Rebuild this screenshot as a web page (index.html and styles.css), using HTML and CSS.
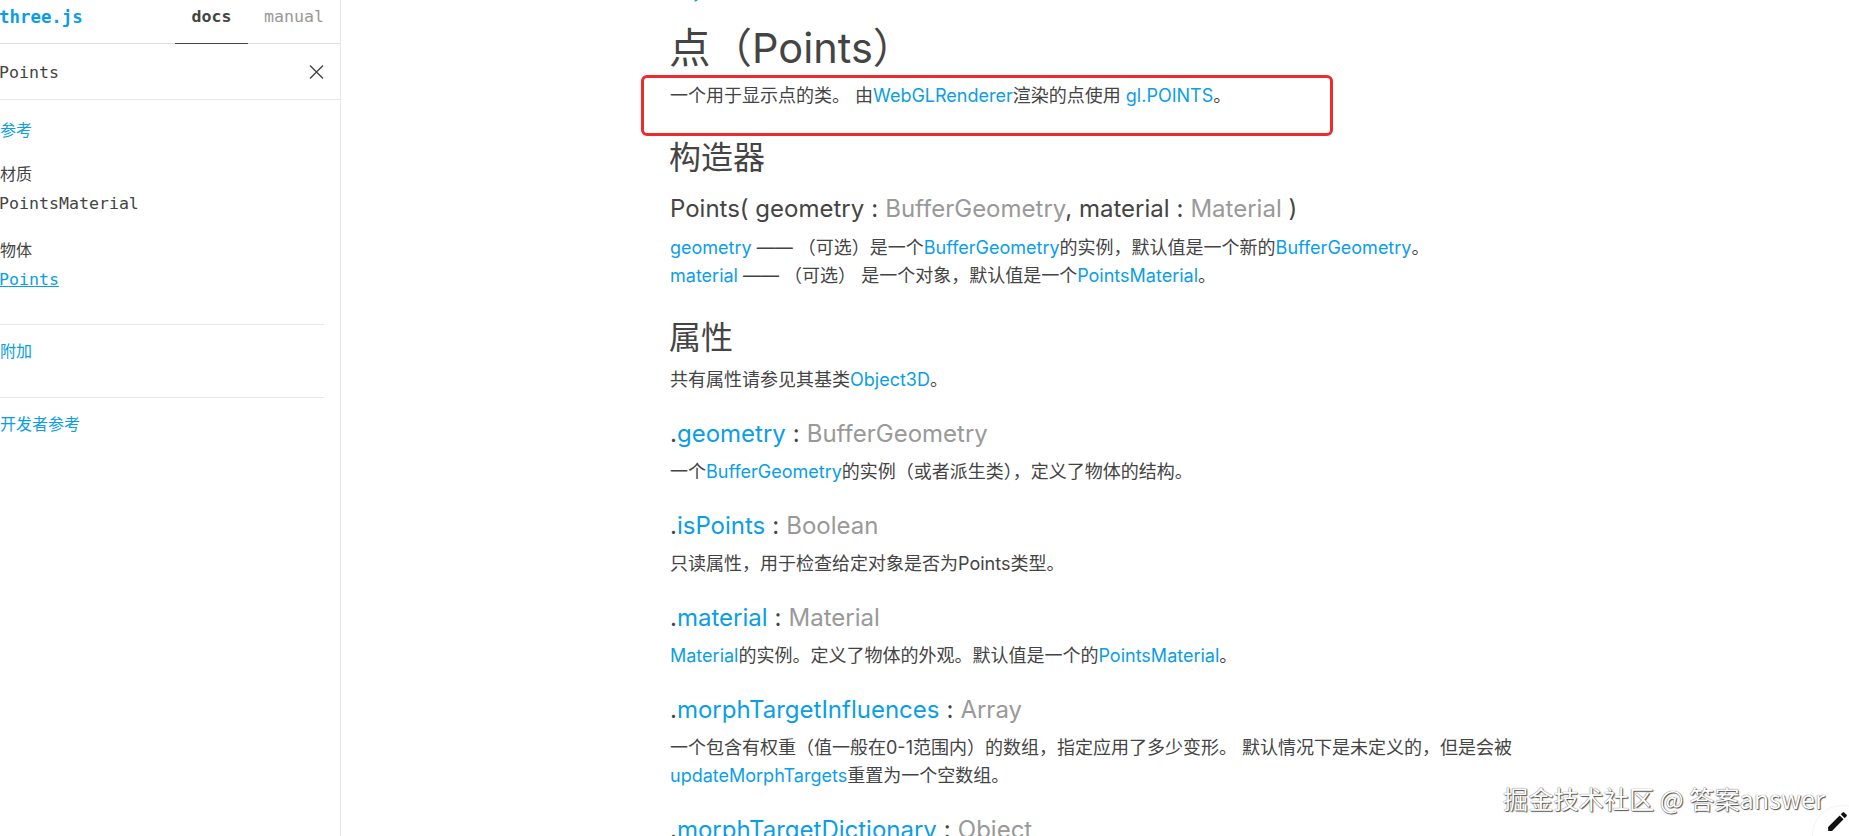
FILE: index.html
```html
<!DOCTYPE html>
<html lang="zh">
<head>
<meta charset="utf-8">
<title>Points</title>
<link rel="stylesheet" href="styles.css">
</head>
<body>
<aside class="side">
  <header class="top">
    <a class="logo">three.js</a>
    <nav class="tabs"><span class="tab on">docs</span><span class="tab">manual</span></nav>
  </header>
  <div class="search">
    <span class="query">Points</span>
    <svg class="close" width="16" height="16" viewBox="0 0 16 16"><path d="M2 1.5 15 14.5M15 1.5 2 14.5" stroke="#444" stroke-width="1.4" fill="none"/></svg>
  </div>
  <div class="nav">
    <h2 class="cat first">参考</h2>
    <h3 class="grp">材质</h3>
    <a class="item">PointsMaterial</a>
    <h3 class="grp">物体</h3>
    <a class="item cur">Points</a>
    <hr class="rule">
    <h2 class="cat">附加</h2>
    <hr class="rule">
    <h2 class="cat">开发者参考</h2>
  </div>
</aside>
<main class="main">
  <p class="crumb"><a>Object3D</a></p>
  <h1 class="title">点（Points）</h1>
  <p class="p intro">一个用于显示点的类。 由<a>WebGLRenderer</a>渲染的点使用 <a>gl.POINTS</a>。</p>
  <h2 class="sec">构造器</h2>
  <h3 class="sig">Points( geometry<i class="c">:</i><span class="t">BufferGeometry</span>, material<i class="c">:</i><span class="t">Material</span> )</h3>
  <p class="p"><a>geometry</a> —— （可选）是一个<a>BufferGeometry</a>的实例，默认值是一个新的<a>BufferGeometry</a>。<br><a>material</a> —— （可选） 是一个对象，默认值是一个<a>PointsMaterial</a>。</p>
  <h2 class="sec">属性</h2>
  <p class="p">共有属性请参见其基类<a>Object3D</a>。</p>
  <h3 class="prop">.<a>geometry</a><i class="c">:</i><span class="t">BufferGeometry</span></h3>
  <p class="p">一个<a>BufferGeometry</a>的实例（或者派生类），定义了物体的结构。</p>
  <h3 class="prop">.<a>isPoints</a><i class="c">:</i><span class="t">Boolean</span></h3>
  <p class="p">只读属性，用于检查给定对象是否为Points类型。</p>
  <h3 class="prop">.<a>material</a><i class="c">:</i><span class="t">Material</span></h3>
  <p class="p"><a>Material</a>的实例。定义了物体的外观。默认值是一个的<a>PointsMaterial</a>。</p>
  <h3 class="prop">.<a>morphTargetInfluences</a><i class="c">:</i><span class="t">Array</span></h3>
  <p class="p">一个包含有权重（值一般在0-1范围内）的数组，指定应用了多少变形。 默认情况下是未定义的，但是会被<br><a>updateMorphTargets</a>重置为一个空数组。</p>
  <h3 class="prop">.<a>morphTargetDictionary</a><i class="c">:</i><span class="t">Object</span></h3>
</main>
<div class="mark"></div>
<div class="wm">掘金技术社区 @ 答案answer</div>
<div class="fab">
  <svg class="pencil" width="25" height="25" viewBox="0 0 24 24"><path d="M3 17.25V21h3.75L17.81 9.94l-3.75-3.75L3 17.25zM20.71 7.04a1 1 0 0 0 0-1.41l-2.34-2.34a1 1 0 0 0-1.41 0l-1.83 1.83 3.75 3.75 1.83-1.83z" fill="#111"/></svg>
</div>
</body>
</html>
```
FILE: styles.css
```css
* { box-sizing: border-box; }
html, body { margin: 0; height: 100%; overflow: hidden; background: #fff; }
body { display: flex; font-family: Inter, "Noto Sans CJK SC", sans-serif; color: #444; }
a { color: #0a9ee8; text-decoration: none; }

.side { width: 341px; height: 836px; flex: none; border-right: 1px solid #e8e8e8; font-family: "DejaVu Sans Mono", "Noto Sans CJK SC", monospace; font-size: 16.6px; }
.top { height: 44px; display: flex; justify-content: space-between; border-bottom: 1px solid #e0e0e0; }
.logo { font-size: 17.4px; font-weight: 700; line-height: 34px; margin-left: -1px; }
.tabs { display: flex; padding-right: 16px; }
.tab { width: 73px; height: 44px; text-align: center; line-height: 33px; color: #999; }
.tab.on { color: #444; font-weight: 700; border-bottom: 1px solid #444; }
.tab + .tab { width: 76px; text-align: right; }
.search { height: 56px; display: flex; justify-content: space-between; align-items: center; border-bottom: 1px solid #e8e8e8; padding-right: 16px; }
.query { margin-left: -1px; padding-top: 2px; }
.close { margin-top: 1px; }
.nav { padding-right: 16px; }
.cat { margin: 0; font-size: 16px; font-weight: 400; line-height: 24px; color: #0a9ee8; }
.first { padding-top: 19px; }
.grp { margin: 20px 0 0; font-size: 16px; font-weight: 400; line-height: 24px; color: #444; }
.item { display: block; margin: 5px 0 0 -1px; line-height: 24px; color: #444; }
.grp ~ .grp { margin-top: 23px; }
.item.cur { color: #0a9ee8; text-decoration: underline; }
.rule { margin: 32px 0 0; border: 0; border-top: 1px solid #e8e8e8; }
.rule + .cat { margin-top: 15px; }
.rule ~ .rule { margin-top: 33px; }

.main { flex: none; width: 860px; margin-left: 329px; margin-top: -20px; }
.crumb { margin: 0; font-size: 18px; line-height: 24px; height: 24px; }
.title { margin: 18px 0 0 -1px; font-size: 41.5px; font-weight: 400; line-height: 52px; }
.p { margin: 0; font-size: 18px; line-height: 28px; }
.intro { margin-top: 8px; }
.sec { margin: 26px 0 0 -1px; font-size: 32px; font-weight: 400; line-height: 44px; }
.sig { margin: 13px 0 9px; font-size: 24px; font-weight: 400; line-height: 32px; }
.sec + .p { margin-top: 6px; }
.prop { margin: 24px 0 8px; font-size: 24px; font-weight: 400; line-height: 32px; }
.c { font-style: normal; padding: 0 7px; }
.t { color: #999; }

.mark { position: absolute; left: 641px; top: 75px; width: 692px; height: 61px; border: 3px solid #ec2b2f; border-radius: 6px; }
.wm { position: absolute; left: 1503px; top: 780px; font-family: "Noto Sans CJK SC", sans-serif; font-size: 25.2px; line-height: 36px; color: #fff; text-shadow: 0 0 1px #333, 1px 1px 1px #555; white-space: nowrap; }
.fab { position: absolute; left: 1812px; top: 805px; width: 60px; height: 60px; border: 1px solid #f4f4f4; border-radius: 50%; padding: 3px 0 0 12px; }
.pencil { display: block; }
```
